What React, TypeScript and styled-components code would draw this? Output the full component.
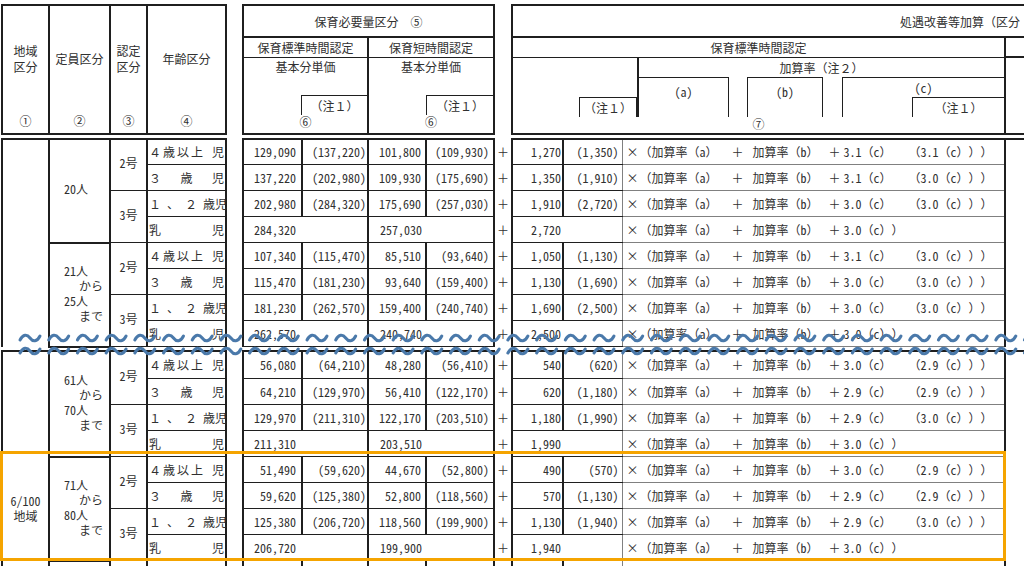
import React from 'react'
import styled, { createGlobalStyle } from 'styled-components'

const INK = '#1f1f1f'
const TEXT = '#303030'
const SOFT = '#808080'
const WAVE = '#4a79aa'
const HIGHLIGHT = '#f5a400'

const COLUMN_WIDTHS = [47, 61, 37, 79, 17, 59, 66, 58, 68, 18, 51, 59, 383, 105]

const GlobalStyle = createGlobalStyle`
  html, body {
    margin: 0;
    padding: 0;
    background: #ffffff;
  }
  body {
    font-family: "Noto Sans Mono CJK JP", "Noto Sans CJK JP", "DejaVu Sans Mono", monospace;
    font-size: 12px;
    color: ${TEXT};
    text-spacing-trim: space-all;
  }
`

const Page = styled.div`
  position: relative;
  width: 1024px;
  height: 566px;
  overflow: hidden;
  padding: 4px 0 0 1px;
  box-sizing: border-box;
`

const Sheet = styled.table<{ $gap?: number }>`
  table-layout: fixed;
  border-collapse: collapse;
  width: 1108px;
  margin-top: ${p => p.$gap ?? 0}px;
`

const Col = styled.col<{ $w: number }>`
  width: ${p => p.$w}px;
`

const Columns = () => (
  <colgroup>
    {COLUMN_WIDTHS.map((w, i) => (
      <Col key={i} $w={w} />
    ))}
  </colgroup>
)

/* ---------- header ---------- */

const HeadRow = styled.tr<{ $h: number }>`
  height: ${p => p.$h}px;
`

const HeadLabel = styled.td`
  border: 2px solid ${INK};
  padding: 0;
  vertical-align: top;
  text-align: center;
`

const HeadStack = styled.div`
  display: flex;
  flex-direction: column;
  align-items: center;
  height: 126px;
`

const HeadText = styled.div`
  flex: 1;
  display: flex;
  align-items: center;
  justify-content: center;
  line-height: 16px;
  padding-bottom: 2px;
`

const Circled = styled.div`
  line-height: 14px;
  padding-bottom: 4px;
  text-align: center;
`

const BlankHead = styled.td`
  border: none;
  padding: 0;
`

const CategoryHead = styled.td`
  border: 2px solid ${INK};
  padding: 0;
  text-align: center;
  white-space: nowrap;
`

const WideHead = styled.td`
  border: 2px solid ${INK};
  padding: 0 0 0 387px;
  text-align: left;
  white-space: nowrap;
  overflow: hidden;
`

const SubHead = styled.td`
  border-left: 2px solid ${INK};
  border-right: 2px solid ${INK};
  border-top: 1px solid ${INK};
  border-bottom: 1px solid ${INK};
  padding: 0;
  text-align: center;
  white-space: nowrap;
`

const TailHead = styled.td`
  border-left: 2px solid ${INK};
  border-top: 1px solid ${INK};
  border-bottom: 2px solid ${INK};
  padding: 0;
`

const BaseHead = styled.td`
  border-left: 2px solid ${INK};
  border-right: 2px solid ${INK};
  border-top: 1px solid ${INK};
  border-bottom: 2px solid ${INK};
  padding: 0;
  vertical-align: top;
`

const BaseStack = styled.div`
  display: flex;
  flex-direction: column;
  height: 75px;
`

const BaseTitle = styled.div`
  flex: 1;
  text-align: center;
  line-height: 14px;
  padding-top: 2px;
`

const NoteTab = styled.div<{ $w: number; $closed?: boolean }>`
  align-self: flex-end;
  width: ${p => p.$w}px;
  height: 20px;
  box-sizing: border-box;
  border-top: 1px solid ${INK};
  border-left: 1px solid ${INK};
  border-right: ${p => (p.$closed ? `1px solid ${INK}` : 'none')};
  text-align: center;
  line-height: 19px;
  white-space: nowrap;
`

const RateTop = styled.div`
  flex: 1;
  display: flex;
`

const RateLead = styled.div`
  width: 126px;
  box-sizing: border-box;
  border-right: 2px solid ${INK};
  display: flex;
  flex-direction: column;
  justify-content: flex-end;
  padding-left: 50px;
`

const RateMain = styled.div`
  flex: 1;
  display: flex;
  flex-direction: column;
`

const RateTitle = styled.div`
  height: 19px;
  line-height: 19px;
  text-align: center;
`

const RateBoxes = styled.div`
  flex: 1;
  display: flex;
`

const RateBox = styled.div<{ $w?: number; $ml?: number; $left?: boolean; $right?: boolean }>`
  ${p => (p.$w ? `width: ${p.$w}px;` : 'flex: 1;')}
  margin-left: ${p => p.$ml ?? 0}px;
  box-sizing: border-box;
  border-top: 1px solid ${INK};
  border-left: ${p => (p.$left ? `1px solid ${INK}` : 'none')};
  border-right: ${p => (p.$right ? `1px solid ${INK}` : 'none')};
  text-align: center;
  line-height: 14px;
  padding-top: 7px;
`

const RateBoxWide = styled.div`
  flex: 1;
  margin-left: 19px;
  border-top: 1px solid ${INK};
  border-left: 1px solid ${INK};
  display: flex;
  flex-direction: column;
`

const RateBoxLabel = styled.div`
  flex: 1;
  line-height: 19px;
  text-align: center;
`

/* ---------- body ---------- */

const BodyRow = styled.tr<{ $h: number }>`
  height: ${p => p.$h}px;
`

const RegionCell = styled.td<{ $pad: number }>`
  border-left: 2px solid ${INK};
  border-right: 2px solid ${INK};
  padding: ${p => p.$pad}px 0 0 0;
  vertical-align: top;
  text-align: center;
  line-height: 15px;
`

const CapacityCell = styled.td`
  border: 2px solid ${INK};
  padding: 0 0 4px 14px;
  white-space: nowrap;
`

const CapLine = styled.div<{ $indent: boolean }>`
  line-height: 15px;
  padding-left: ${p => (p.$indent ? 15 : 0)}px;
`

const CertCell = styled.td`
  border-left: 2px solid ${INK};
  border-right: 2px solid ${INK};
  border-top: 1px solid ${INK};
  border-bottom: 1px solid ${INK};
  padding: 0 0 4px 0;
  text-align: center;
`

const AgeCell = styled.td`
  border-left: 2px solid ${INK};
  border-right: 2px solid ${INK};
  border-top: 1px solid ${INK};
  border-bottom: 1px solid ${INK};
  padding: 0 1px 0 1px;
`

const AgeLabel = styled.div`
  display: flex;
  justify-content: space-between;
  white-space: nowrap;
`

const AgePiece = styled.span<{ $ls?: number }>`
  letter-spacing: ${p => p.$ls ?? 0}px;
`

const GapCell = styled.td`
  border: none;
  padding: 0;
`

const NumCell = styled.td<{ $pad: number; $soft?: boolean }>`
  border-left: 2px solid ${INK};
  border-right: ${p => (p.$soft ? `1px solid ${SOFT}` : `2px solid ${INK}`)};
  border-top: 1px solid ${INK};
  border-bottom: 1px solid ${INK};
  padding: 0 ${p => p.$pad}px 0 0;
  text-align: right;
  white-space: nowrap;
`

const MergedCell = styled.td<{ $pad: number; $soft?: boolean }>`
  border-left: 2px solid ${INK};
  border-right: ${p => (p.$soft ? `1px solid ${SOFT}` : `2px solid ${INK}`)};
  border-top: 1px solid ${INK};
  border-bottom: 1px solid ${INK};
  padding: 0 0 0 ${p => p.$pad}px;
  text-align: left;
  white-space: nowrap;
`

const PlusCell = styled.td`
  border: none;
  padding: 0;
  text-align: center;
`

const FormulaCell = styled.td`
  border-left: 1px solid ${SOFT};
  border-right: 2px solid ${INK};
  border-top: 1px solid ${SOFT};
  border-bottom: 1px solid ${SOFT};
  padding: 0 0 0 4px;
  white-space: nowrap;
`

const FormulaGrid = styled.div`
  display: grid;
  grid-template-columns: 13px 92px 21px 76px 15px 65px auto;
`

const TailCell = styled.td`
  border-left: 2px solid ${INK};
  padding: 0;
`

const SectionSheet = styled(Sheet)`
  & > tbody > tr:first-child > td {
    border-top: 2px solid ${INK};
  }
  & > tbody > tr:first-child > ${GapCell}, & > tbody > tr:first-child > ${PlusCell} {
    border-top: none;
  }
`

/* ---------- overlays ---------- */

const WaveLayer = styled.svg`
  position: absolute;
  left: 0;
  top: 328px;
  pointer-events: none;
`

const Highlight = styled.div`
  position: absolute;
  left: 0;
  top: 451px;
  width: 1006px;
  height: 110px;
  box-sizing: border-box;
  border: 3px solid ${HIGHLIGHT};
  pointer-events: none;
`

/* ---------- data ---------- */

type Pair = [string, string?]
interface AgePart {
  t: string
  ls?: number
}
interface AgeRow {
  age: AgePart[]
  std: Pair
  short: Pair
  add: Pair
  c: string
  s?: string
}
interface Group {
  cap: string[]
  rows: AgeRow[]
}

const AGE_4: AgePart[] = [{ t: '４歳以上', ls: 2 }, { t: '児' }]
const AGE_3: AgePart[] = [{ t: '３' }, { t: '歳' }, { t: '児' }]
const AGE_12: AgePart[] = [{ t: '１、２', ls: 6 }, { t: '歳児' }]
const AGE_0: AgePart[] = [{ t: '乳' }, { t: '児' }]

const row = (age: AgePart[], std: Pair, short: Pair, add: Pair, c: string, s?: string): AgeRow => ({
  age,
  std,
  short,
  add,
  c,
  s,
})

const UPPER: Group[] = [
  {
    cap: ['20人'],
    rows: [
      row(AGE_4, ['129,090', '(137,220)'], ['101,800', '(109,930)'], ['1,270', '(1,350)'], '3.1', '3.1'),
      row(AGE_3, ['137,220', '(202,980)'], ['109,930', '(175,690)'], ['1,350', '(1,910)'], '3.1', '3.0'),
      row(AGE_12, ['202,980', '(284,320)'], ['175,690', '(257,030)'], ['1,910', '(2,720)'], '3.0', '3.0'),
      row(AGE_0, ['284,320'], ['257,030'], ['2,720'], '3.0'),
    ],
  },
  {
    cap: ['21人', 'から', '25人', 'まで'],
    rows: [
      row(AGE_4, ['107,340', '(115,470)'], ['85,510', '(93,640)'], ['1,050', '(1,130)'], '3.1', '3.0'),
      row(AGE_3, ['115,470', '(181,230)'], ['93,640', '(159,400)'], ['1,130', '(1,690)'], '3.0', '3.0'),
      row(AGE_12, ['181,230', '(262,570)'], ['159,400', '(240,740)'], ['1,690', '(2,500)'], '3.0', '3.0'),
      row(AGE_0, ['262,570'], ['240,740'], ['2,500'], '3.0'),
    ],
  },
]

const LOWER: Group[] = [
  {
    cap: ['61人', 'から', '70人', 'まで'],
    rows: [
      row(AGE_4, ['56,080', '(64,210)'], ['48,280', '(56,410)'], ['540', '(620)'], '3.0', '2.9'),
      row(AGE_3, ['64,210', '(129,970)'], ['56,410', '(122,170)'], ['620', '(1,180)'], '2.9', '2.9'),
      row(AGE_12, ['129,970', '(211,310)'], ['122,170', '(203,510)'], ['1,180', '(1,990)'], '2.9', '3.0'),
      row(AGE_0, ['211,310'], ['203,510'], ['1,990'], '3.0'),
    ],
  },
  {
    cap: ['71人', 'から', '80人', 'まで'],
    rows: [
      row(AGE_4, ['51,490', '(59,620)'], ['44,670', '(52,800)'], ['490', '(570)'], '3.0', '2.9'),
      row(AGE_3, ['59,620', '(125,380)'], ['52,800', '(118,560)'], ['570', '(1,130)'], '2.9', '2.9'),
      row(AGE_12, ['125,380', '(206,720)'], ['118,560', '(199,900)'], ['1,130', '(1,940)'], '2.9', '3.0'),
      row(AGE_0, ['206,720'], ['199,900'], ['1,940'], '3.0'),
    ],
  },
]

/* ---------- pieces ---------- */

function Formula({ c, s }: { c: string; s?: string }) {
  return (
    <FormulaGrid>
      <span>×</span>
      <span>（加算率（a）</span>
      <span>＋</span>
      <span>加算率（b）</span>
      <span>＋</span>
      <span>{s ? `${c}（c）` : `${c}（c））`}</span>
      <span>{s ? `（${s}（c）））` : ''}</span>
    </FormulaGrid>
  )
}

function Values({ pair, pads, merged, soft }: { pair: Pair; pads: [number, number]; merged: number; soft?: boolean }) {
  if (pair[1] === undefined) {
    return (
      <MergedCell colSpan={2} $pad={merged} $soft={soft}>
        {pair[0]}
      </MergedCell>
    )
  }
  return (
    <>
      <NumCell $pad={pads[0]}>{pair[0]}</NumCell>
      <NumCell $pad={pads[1]} $soft={soft}>
        {pair[1]}
      </NumCell>
    </>
  )
}

function BodySection({
  groups,
  region,
  regionPad,
  firstHeight,
  trailing,
  gap,
}: {
  groups: Group[]
  region: string[]
  regionPad: number
  firstHeight: number
  trailing?: boolean
  gap: number
}) {
  const total = groups.length * 4 + (trailing ? 1 : 0)
  return (
    <SectionSheet $gap={gap}>
      <Columns />
      <tbody>
        {groups.flatMap((g, gi) =>
          g.rows.map((r, ri) => (
            <BodyRow key={`${gi}-${ri}`} $h={gi === 0 && ri === 0 ? firstHeight : 26}>
              {gi === 0 && ri === 0 && (
                <RegionCell rowSpan={total} $pad={regionPad}>
                  {region.map(line => (
                    <div key={line}>{line}</div>
                  ))}
                </RegionCell>
              )}
              {ri === 0 && (
                <CapacityCell rowSpan={4}>
                  {g.cap.map((line, i) => (
                    <CapLine key={line} $indent={i % 2 === 1}>
                      {line}
                    </CapLine>
                  ))}
                </CapacityCell>
              )}
              {ri % 2 === 0 && <CertCell rowSpan={2}>{ri === 0 ? '2号' : '3号'}</CertCell>}
              <AgeCell>
                <AgeLabel>
                  {r.age.map(part => (
                    <AgePiece key={part.t} $ls={part.ls}>
                      {part.t}
                    </AgePiece>
                  ))}
                </AgeLabel>
              </AgeCell>
              <GapCell />
              <Values pair={r.std} pads={[5, 1]} merged={10} />
              <Values pair={r.short} pads={[4, 4]} merged={11} />
              <PlusCell>＋</PlusCell>
              <Values pair={r.add} pads={[1, 3]} merged={18} soft />
              <FormulaCell>
                <Formula c={r.c} s={r.s} />
              </FormulaCell>
              <TailCell />
            </BodyRow>
          ))
        )}
        {trailing && (
          <BodyRow $h={26}>
            <CapacityCell />
            <CertCell />
            <AgeCell />
            <GapCell />
            <NumCell $pad={0} />
            <NumCell $pad={0} />
            <NumCell $pad={0} />
            <NumCell $pad={0} />
            <PlusCell />
            <NumCell $pad={0} />
            <NumCell $pad={0} $soft />
            <FormulaCell />
            <TailCell />
          </BodyRow>
        )}
      </tbody>
    </SectionSheet>
  )
}

function Tilde({ x, y }: { x: number; y: number }) {
  return (
    <path
      d={`M${x} ${y + 2} C${x + 3} ${y - 4} ${x + 7} ${y - 4} ${x + 10} ${y} S${x + 17} ${y + 4} ${x + 20} ${y - 2}`}
    />
  )
}

function Waves() {
  const xs = Array.from({ length: 36 }, (_, i) => 20 + i * 28.7)
  return (
    <WaveLayer width={1024} height={32} viewBox="0 0 1024 32">
      <g fill="none" stroke={WAVE} strokeWidth={3} strokeLinecap="round">
        {xs.map(x => (
          <Tilde key={`a${x}`} x={x} y={10} />
        ))}
        {xs.map(x => (
          <Tilde key={`b${x}`} x={x} y={23} />
        ))}
      </g>
    </WaveLayer>
  )
}

function Header() {
  return (
    <Sheet>
      <Columns />
      <tbody>
        <HeadRow $h={32}>
          <HeadLabel rowSpan={3}>
            <HeadStack>
              <HeadText>
                地域
                <br />
                区分
              </HeadText>
              <Circled>①</Circled>
            </HeadStack>
          </HeadLabel>
          <HeadLabel rowSpan={3}>
            <HeadStack>
              <HeadText>定員区分</HeadText>
              <Circled>②</Circled>
            </HeadStack>
          </HeadLabel>
          <HeadLabel rowSpan={3}>
            <HeadStack>
              <HeadText>
                認定
                <br />
                区分
              </HeadText>
              <Circled>③</Circled>
            </HeadStack>
          </HeadLabel>
          <HeadLabel rowSpan={3}>
            <HeadStack>
              <HeadText>年齢区分</HeadText>
              <Circled>④</Circled>
            </HeadStack>
          </HeadLabel>
          <BlankHead rowSpan={3} />
          <CategoryHead colSpan={4}>保育必要量区分　⑤</CategoryHead>
          <BlankHead rowSpan={3} />
          <WideHead colSpan={4}>処遇改善等加算（区分</WideHead>
        </HeadRow>
        <HeadRow $h={20}>
          <SubHead colSpan={2}>保育標準時間認定</SubHead>
          <SubHead colSpan={2}>保育短時間認定</SubHead>
          <SubHead colSpan={3}>保育標準時間認定</SubHead>
          <TailHead />
        </HeadRow>
        <HeadRow $h={76}>
          <BaseHead colSpan={2}>
            <BaseStack>
              <BaseTitle>基本分単価</BaseTitle>
              <NoteTab $w={66}>（注１）</NoteTab>
              <Circled>⑥</Circled>
            </BaseStack>
          </BaseHead>
          <BaseHead colSpan={2}>
            <BaseStack>
              <BaseTitle>基本分単価</BaseTitle>
              <NoteTab $w={67}>（注１）</NoteTab>
              <Circled>⑥</Circled>
            </BaseStack>
          </BaseHead>
          <BaseHead colSpan={3}>
            <BaseStack>
              <RateTop>
                <RateLead>
                  <NoteTab $w={58} $closed>
                    （注１）
                  </NoteTab>
                </RateLead>
                <RateMain>
                  <RateTitle>加算率（注２）</RateTitle>
                  <RateBoxes>
                    <RateBox $w={90} $right>
                      (a)
                    </RateBox>
                    <RateBox $w={76} $ml={18} $left $right>
                      (b)
                    </RateBox>
                    <RateBoxWide>
                      <RateBoxLabel>(c)</RateBoxLabel>
                      <NoteTab $w={92}>（注１）</NoteTab>
                    </RateBoxWide>
                  </RateBoxes>
                </RateMain>
              </RateTop>
              <Circled>⑦</Circled>
            </BaseStack>
          </BaseHead>
          <TailHead />
        </HeadRow>
      </tbody>
    </Sheet>
  )
}

export default function App() {
  return (
    <>
      <GlobalStyle />
      <Page>
        <Header />
        <BodySection groups={UPPER} region={[]} regionPad={0} firstHeight={26} gap={3} />
        <BodySection
          groups={LOWER}
          region={['6/100', '地域']}
          regionPad={141}
          firstHeight={28}
          trailing
          gap={2}
        />
        <Waves />
        <Highlight />
      </Page>
    </>
  )
}
